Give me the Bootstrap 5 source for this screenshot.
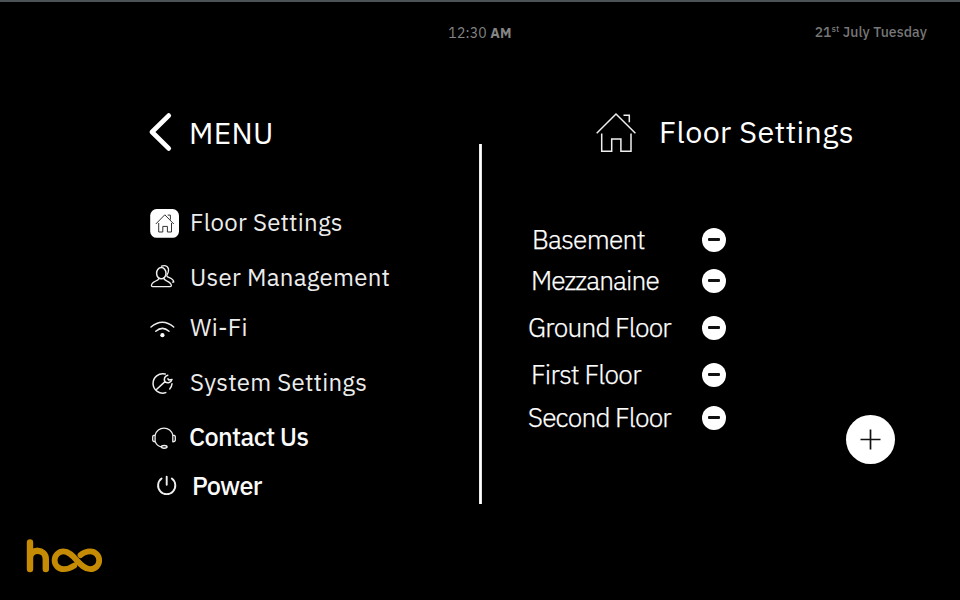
<!DOCTYPE html>
<html lang="en" data-bs-theme="dark">
<head>
<meta charset="utf-8">
<meta name="viewport" content="width=device-width, initial-scale=1">
<title>Floor Settings</title>
<link href="https://cdn.jsdelivr.net/npm/bootstrap@5.3.0/dist/css/bootstrap.min.css" rel="stylesheet">
<style>
body{background:#000;color:#f2f2f2;font-family:"IBM Plex Sans","Open Sans","Liberation Sans",sans-serif;white-space:nowrap}
.screen{width:960px;height:600px;border-top:2px solid #4c5356}
.topbar{height:60px;font-size:14px;line-height:20px;color:#858585;display:grid;grid-template-columns:1fr 1fr 1fr;padding:0 33px}
.topbar sup{font-size:9px;top:-5px;line-height:0;vertical-align:baseline}
.clock{padding-top:21px;letter-spacing:.15px}
.today{padding-top:20px;font-weight:500;letter-spacing:.08px;color:#777}
.panes{height:450px}
.menu-pane{width:479px;padding:40px 0 0 148px}
.floor-pane{padding:40px 0 0 46px}
.rule{width:3px;height:360px;margin-top:82px;background:linear-gradient(90deg,#ddd 0,#fff 40%,#fff 75%,#aaa)}
.pane-title{height:60px;font-size:30.5px;font-weight:400;letter-spacing:.4px;line-height:60px;margin:0}
.menu-title{padding-left:7px;font-size:30px;letter-spacing:.3px;line-height:61px}
.floor-head{padding-left:67px}
.floor-title{padding-left:20px}
.entry{height:40px;line-height:40px;font-size:24px;letter-spacing:.27px;color:#ececec;text-decoration:none}
.entry span{padding-left:8px}
.entry.strong{font-size:25.3px;font-weight:500;letter-spacing:-.66px;color:#fafafa}
.entry.contact span{padding-left:7px}
.entry.power span{padding-left:10px}
.first-entry{margin-top:40px}
.ic{width:34px;flex:none;fill:none;stroke:#efefef;stroke-width:1.5;stroke-linecap:round;stroke-linejoin:round}
.ic.large{width:44px}
.gap-a{margin-top:15px}.gap-b{margin-top:10px}.gap-c{margin-top:9px}
.floor{height:36px;line-height:36px;font-size:26.3px;font-weight:300;letter-spacing:-.7px;color:#fff;-webkit-text-stroke:.25px #fff}
.floor span{width:173.6px;padding-left:4px}
.floor.inset span{padding-left:3px}
.floor.wide span{padding-left:0;letter-spacing:-.8px}
.floor-head+.floor{margin-top:59px}
.floor+.floor{margin-top:11px}
.floor+.floor.tight{margin-top:5px}
.tight span{letter-spacing:-.9px}
.floor+.floor.last-floor{margin-top:7px}
.round{border:0;border-radius:50%;background:#fff;padding:0;display:flex;align-items:center;justify-content:center;flex:none}
.minus{width:24px;height:24px;margin-top:1px}
.minus::before{content:"";width:12px;height:2.5px;background:#111;border-radius:1px}
.add{width:49px;height:49px;margin-right:65px;margin-top:-97px}
.brand{height:88px;padding:25px 0 0 24px}
</style>
</head>
<body>
<div class="screen d-flex flex-column overflow-hidden">
  <header class="topbar">
    <span></span>
    <div class="clock text-center">12:30 <b>AM</b></div>
    <div class="today text-end">21<sup>st</sup> July Tuesday</div>
  </header>
  <main class="panes d-flex">
    <nav class="menu-pane flex-shrink-0">
      <div class="d-flex">
        <svg class="ic" height="60" viewBox="0 0 34 60"><path d="M20.7 13.6 4 30 20.7 46.4" stroke="#fff" stroke-width="4.8"/></svg>
        <h1 class="pane-title menu-title">MENU</h1>
      </div>
      <a class="entry d-flex first-entry" href="#">
        <svg class="ic" height="40" viewBox="0 0 34 40"><rect x="2.2" y="7" width="28.8" height="28.8" rx="6.5" fill="#fff" stroke="none"/><path d="M7.8 22l9-9.2 9 9.2M10.7 21v9h4.1v-5.6h4.6V30h4.1v-9M19.7 13.1h2.7v4.6" stroke="#333" stroke-width="1" stroke-linecap="butt"/></svg>
        <span>Floor Settings</span>
      </a>
      <a class="entry d-flex gap-a" href="#">
        <svg class="ic" height="40" viewBox="0 0 34 40"><ellipse cx="13.3" cy="16.2" rx="4.7" ry="5.6"/><path d="M10.9 21C11.2 24.3 3.6 23.8 3.4 28.6q0 1.1 1.2 1.1H22.2q1.2 0 1.2-1.1C23.2 23.8 15.5 24.3 15.9 21M13.500 9.200c4.500-2 8 1.200 6.800 5.600-.5 1.800-1.200 2.500-1.500 4 .3 2.200 6.600 1.700 7 6.300H24.500" stroke-width="1.3"/></svg>
        <span>User Management</span>
      </a>
      <a class="entry d-flex gap-b" href="#">
        <svg class="ic" height="40" viewBox="0 0 34 40"><path d="M3 20q11.4-9.6 22.7 0M7.8 24.2q6.6-5.6 13.2 0"/><circle cx="14.4" cy="28.2" r="2.1" fill="#fff" stroke="none"/></svg>
        <span>Wi-Fi</span>
      </a>
      <a class="entry d-flex gap-a" href="#">
        <svg class="ic" height="40" viewBox="0 0 34 40"><path d="M17.2 12A9.7 9.7 0 1 0 17.8 30.6M8.2 27.8 17 19.6M19.8 13.2C16.8 13.8 15.4 17 17 19.6 19.6 21.8 23.3 20.4 24 17.4L20.8 18 19.9 16.800M24 21.800Q23.700 25 21.700 27"/></svg>
        <span>System Settings</span>
      </a>
      <a class="entry strong contact d-flex gap-a" href="#">
        <svg class="ic" height="40" viewBox="0 0 34 40"><path d="M7.2 18.2a9 9 0 0 1 17.6 0M7.200 24.600q1.600 4.400 6.200 5.200M7.100 18.200v6.600q-2.400 0-2.400-1.800v-3q0-1.800 2.400-1.800zM24.800 18.200v6.600q2.500 0 2.500-1.800v-3q0-1.800-2.500-1.800z" stroke-width="1.3"/><ellipse cx="16.2" cy="29.8" rx="2.8" ry="1.4"/></svg>
        <span>Contact Us</span>
      </a>
      <a class="entry strong power d-flex gap-c" href="#">
        <svg class="ic" height="40" viewBox="0 0 34 40"><path d="M13.6 12.6a8.6 8.6 0 1 0 10.200 0M18.700 10.600v8.200" stroke-width="1.9"/></svg>
        <span>Power</span>
      </a>
    </nav>
    <div class="rule flex-shrink-0"></div>
    <section class="floor-pane flex-grow-1">
      <div class="floor-head d-flex">
        <svg class="ic large" height="60" viewBox="0 0 44 60"><path d="M1.700 31.200 21 12l19.400 19.200M6.700 31.500v17.700h10V37h9.200v12.200H36V31.500M28.500 13.200h5.800v7" stroke-linecap="butt" stroke-linejoin="miter"/></svg>
        <h2 class="pane-title floor-title">Floor Settings</h2>
      </div>
      <div class="floor d-flex align-items-center"><span>Basement</span><button class="round minus" aria-label="Remove Basement"></button></div>
      <div class="floor inset tight d-flex align-items-center"><span>Mezzanaine</span><button class="round minus" aria-label="Remove Mezzanaine"></button></div>
      <div class="floor wide d-flex align-items-center"><span>Ground Floor</span><button class="round minus" aria-label="Remove Ground Floor"></button></div>
      <div class="floor inset d-flex align-items-center"><span>First Floor</span><button class="round minus" aria-label="Remove First Floor"></button></div>
      <div class="floor wide last-floor d-flex align-items-center"><span>Second Floor</span><button class="round minus" aria-label="Remove Second Floor"></button></div>
    </section>
  </main>
  <footer class="d-flex justify-content-between align-items-start">
    <div class="brand"><svg width="82" height="40" viewBox="0 0 82 40" fill="none" stroke="#c68b04" stroke-width="6.4" stroke-linecap="round" role="img" aria-label="hoo"><path d="M6 5.500v26.600M6 21.200c0-10 15.800-10 15.800 1v9.900"/><path d="M50.200 28.600Q45 32.200 39.500 32.200a8.900 8.900 0 0 1 0-17.800C50 14.400 55.500 32.200 66.300 32.200a8.900 8.900 0 0 0 0-17.800Q60.500 14.400 56.500 18.200" stroke-width="5.8"/></svg></div>
    <button class="round add" aria-label="Add floor"><svg width="21" height="21" viewBox="0 0 21 21"><path d="M10.500.5v20M.5 10.500h20" stroke="#111" stroke-width="1.7"/></svg></button>
  </footer>
</div>
<script src="https://cdn.jsdelivr.net/npm/bootstrap@5.3.0/dist/js/bootstrap.bundle.min.js"></script>
</body>
</html>
